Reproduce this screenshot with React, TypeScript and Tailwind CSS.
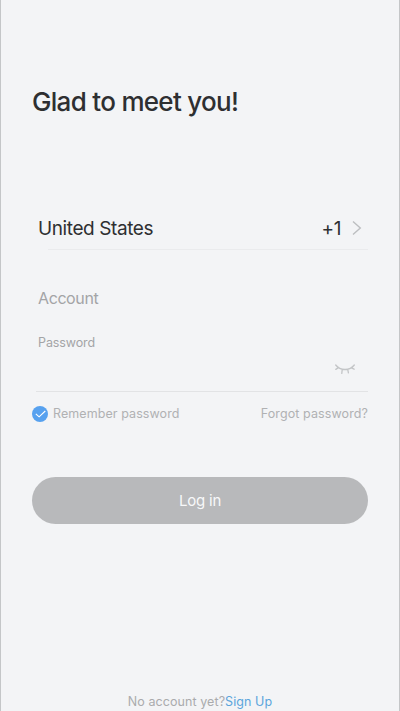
function ChevronIcon() {
    return (
        <svg width="10" height="16" viewBox="0 0 10 16" fill="none" stroke="#bcbec0" strokeWidth="1.4" className="ml-[11px]">
            <path d="M1 1.5 8.3 8 1 14.5" />
        </svg>
    );
}

function ClosedEyeIcon() {
    return (
        <svg width="20" height="11" viewBox="0 0 20 11" fill="none" stroke="#c3c5c7" strokeWidth="1.3" strokeLinecap="round">
            <path d="M.7 1C5.3 7 14.7 7 19.3 1M3.4 3.6.8 5.4M7.2 5.6 6.8 9.4M12.8 5.6l.6 3.2M16.4 3.8l2.7 1.4" />
        </svg>
    );
}

export default function App() {
    return (
        <div className="flex h-[711px] w-[400px] flex-col overflow-hidden border-x border-[#c4c6c8] bg-[#f3f4f6] px-[31px] font-['Inter',sans-serif] text-[#2e2f31] [&>*]:shrink-0">
            <h1 className="mt-[86px] text-[26px] leading-8 font-medium tracking-[-0.7px] whitespace-nowrap">Glad to meet you!</h1>

            {/* Country */}
            <div className="mt-[94px] flex h-8 items-center pr-[6px] pl-[6px] text-[19px] tracking-[-0.4px]">
                <span className="pt-0.5">United States</span>
                <span className="ml-auto pt-0.5">+1</span>
                <ChevronIcon />
            </div>
            <div className="mt-[5px] ml-4 h-px bg-[#eaebed]" />

            {/* Credentials */}
            <div className="mt-[36px] pl-[6px] text-[16px] leading-6 tracking-[-0.4px] text-[#a3a4a6]">Account</div>
            <div className="mt-[22px] pt-px pl-[6px] text-[12.5px] leading-5 tracking-[-0.1px] text-[#a3a4a6]">Password</div>
            <div className="mt-[11px] flex h-[11px] justify-end pr-[13px]">
                <ClosedEyeIcon />
            </div>
            <div className="mt-[16px] ml-1 h-px bg-[#e2e3e5]" />

            <div className="mt-[12px] flex h-5 items-center justify-between text-[12.5px] text-[#b0b1b3]">
                <label className="flex items-center gap-[5px]">
                    <span className="flex h-4 w-4 items-center justify-center rounded-full bg-[#57a1ef]">
                        <svg width="11" height="8" viewBox="0 0 11 8" fill="none" stroke="#fff" strokeWidth="1.1">
                            <path d="m.8 3.8 3.3 3L10.3 1" />
                        </svg>
                    </span>
                    <span className="pt-px tracking-[0.08px]">Remember password</span>
                </label>
                <span className="pt-px tracking-[0.1px]">Forgot password?</span>
            </div>

            <button className="mt-[53px] h-[47px] rounded-full bg-[#b8b9bb] pt-px text-[15px] tracking-[-0.2px] text-[#f7f8f9]">Log in</button>

            <p className="mt-[168px] h-[19px] text-center text-[12.5px] leading-5 tracking-[0.08px] whitespace-nowrap text-[#aaabad]">
                No account yet?<span className="text-[#5ba5dc]">Sign Up</span>
            </p>
        </div>
    );
}
